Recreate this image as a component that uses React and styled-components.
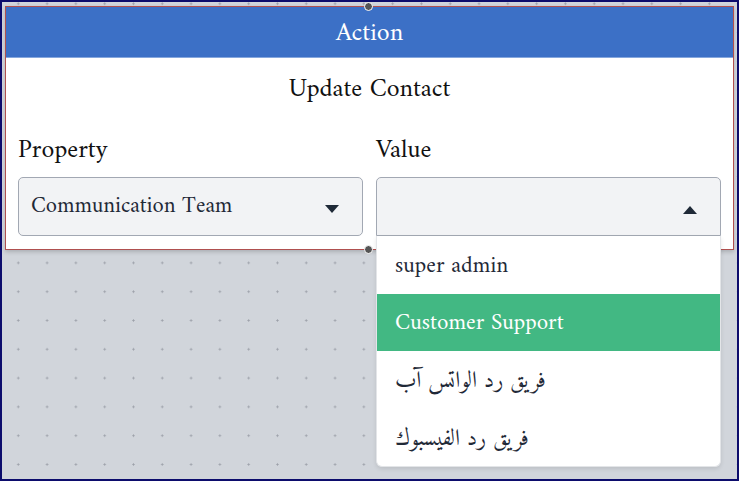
import React from "react";
import styled, { createGlobalStyle } from "styled-components";

const Global = createGlobalStyle`
  html, body { margin: 0; padding: 0; }
  body { width: 739px; height: 481px; overflow: hidden; background: #d1d5db; }
  * { box-sizing: border-box; }
`;

const serif = `"Amiri", "Liberation Serif", "Times New Roman", "DejaVu Serif", serif`;

const Canvas = styled.div`
  width: 739px;
  height: 481px;
  border: 2px solid #0c0c6c;
  background-color: #d1d5db;
  background-image: radial-gradient(circle, #9ca0a9 0.9px, transparent 1.2px);
  background-size: 28.8px 28.8px;
  background-position: 1.9px -12.7px;
  padding: 4px 4px 0 3px;
  font-family: ${serif};
`;

const Node = styled.div`
  position: relative;
  width: 729px;
  background: #ffffff;
  border: 1px solid #b0504f;
  box-shadow: 0 2px 4px rgba(0, 0, 0, 0.18);
`;

const Handle = styled.span`
  position: absolute;
  left: 358px;
  ${(p) => (p.$bottom ? "bottom: -5px;" : "top: -5px;")}
  width: 9px;
  height: 9px;
  border-radius: 50%;
  background: #555555;
  border: 1px solid #ffffff;
  z-index: 3;
`;

const Header = styled.div`
  height: 51px;
  background: #3c70c6;
  border-bottom: 1px solid #86a7dd;
  color: #ffffff;
  font-size: 25.9px;
  display: flex;
  align-items: center;
  justify-content: center;
  padding-top: 2px;
`;

const Body = styled.div`
  padding: 17px 12px 13px 12px;
`;

const Title = styled.div`
  text-align: center;
  font-size: 25.9px;
  line-height: 30px;
  color: #111111;
`;

const Fields = styled.div`
  display: grid;
  grid-template-columns: 345px 345px;
  column-gap: 13px;
  margin-top: 31px;
`;

const Field = styled.div`
  position: relative;
  display: flex;
  flex-direction: column;
  gap: 11px;
`;

const Label = styled.div`
  font-size: 25.9px;
  line-height: 30px;
  color: #111111;
`;

const SelectBox = styled.div`
  height: 59px;
  background: #f2f3f5;
  border: 1px solid #a2a8b3;
  border-radius: ${(p) => (p.$open ? "5px 5px 0 0" : "5px")};
  display: flex;
  align-items: center;
  justify-content: space-between;
  padding: 0 23px 0 12px;
  font-size: 22.6px;
  line-height: 26px;
  color: #1f2937;
`;

const Caret = styled.svg`
  width: 14px;
  height: 8px;
  display: block;
  margin-top: ${(p) => (p.$up ? "6px" : "4px")};
`;

const Menu = styled.div`
  position: absolute;
  top: 100%;
  left: 0;
  width: 345px;
  background: #ffffff;
  border: 1px solid #e3e5e8;
  border-top: none;
  border-radius: 0 0 6px 6px;
  box-shadow: 0 2px 4px rgba(0, 0, 0, 0.1);
  overflow: hidden;
  z-index: 5;
`;

const Item = styled.div`
  height: 57.6px;
  display: flex;
  align-items: center;
  padding: 4px 0 0 18px;
  font-size: 23px;
  line-height: 28px;
  background: ${(p) => (p.$active ? "#42b883" : "transparent")};
  color: ${(p) => (p.$active ? "#ffffff" : "#1f2937")};
`;

const Arabic = styled.span`
  font-family: "Amiri", "Noto Naskh Arabic", "DejaVu Sans", "Noto Sans", sans-serif;
  font-size: 23px;
`;

const CaretIcon = ({ up }) => (
  <Caret $up={up} viewBox="0 0 14 8">
    <path d={up ? "M0 8 L7 0 L14 8 Z" : "M0 0 L14 0 L7 8 Z"} fill="#1f2937" />
  </Caret>
);

const options = [
  { label: "super admin" },
  { label: "Customer Support", active: true },
  { label: "فريق رد الواتس آب", ar: true },
  { label: "فريق رد الفيسبوك", ar: true },
];

export default function App() {
  return (
    <>
      <Global />
      <Canvas>
        <Node>
          <Handle />
          <Header>Action</Header>
          <Body>
            <Title>Update Contact</Title>
            <Fields>
              <Field>
                <Label>Property</Label>
                <SelectBox>
                  <span>Communication Team</span>
                  <CaretIcon />
                </SelectBox>
              </Field>
              <Field>
                <Label>Value</Label>
                <SelectBox $open>
                  <span />
                  <CaretIcon up />
                </SelectBox>
                <Menu>
                  {options.map((o) => (
                    <Item key={o.label} $active={o.active}>
                      {o.ar ? <Arabic dir="rtl">{o.label}</Arabic> : o.label}
                    </Item>
                  ))}
                </Menu>
              </Field>
            </Fields>
          </Body>
          <Handle $bottom />
        </Node>
      </Canvas>
    </>
  );
}
